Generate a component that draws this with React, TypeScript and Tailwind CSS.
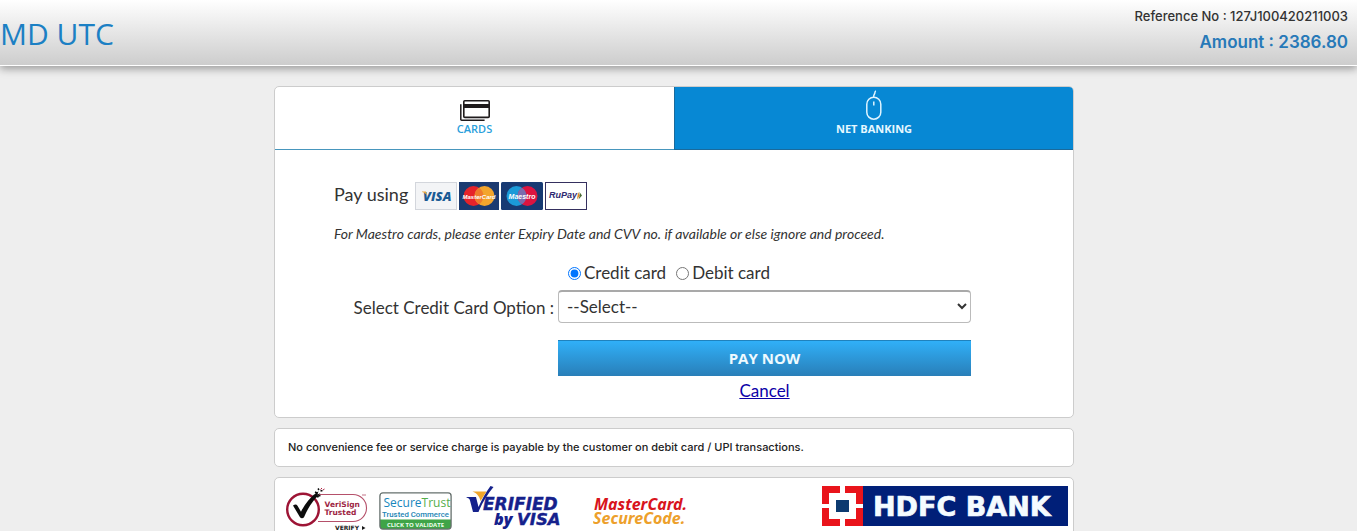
import { useState } from "react";

function CardsIcon() {
  return (
    <svg width="30" height="21" viewBox="0 0 30 21" fill="none" stroke="#1f1b1c" aria-hidden="true">
      <rect x="3.8" y="0.8" width="25.4" height="16.6" rx="1" strokeWidth="1.6" />
      <rect x="4" y="4" width="25" height="4" fill="#1f1b1c" stroke="none" />
      <path d="M0.8 4.2V19.4a0.8 0.8 0 0 0 0.8 0.8H24.6" strokeWidth="1.5" />
    </svg>
  );
}

function MouseIcon() {
  return (
    <svg width="18" height="31" viewBox="0 0 18 31" fill="none" stroke="#dff4ff" strokeWidth="1.5" aria-hidden="true">
      <path d="M8.6 7.2C8.6 4 9.6 4.6 9.8 3.2 10 1.8 10 1.2 11 1" />
      <rect x="1.8" y="7.2" width="14" height="22" rx="7" />
      <path d="M8.8 11.5v4" />
    </svg>
  );
}

function VisaLogo() {
  return (
    <svg width="42" height="28" viewBox="0 0 42 28" role="img" aria-label="Visa">
      <rect x="0.5" y="0.5" width="41" height="27" fill="#f3f4f6" stroke="#d3d6dc" />
      <text x="8" y="19" fontFamily="Open Sans, sans-serif" fontSize="13" fontWeight="800" fontStyle="italic" fill="#1a5a94">VISA</text>
      <path d="M7 9.5h4l1.500 4.500C11 12 9.500 10.500 7 10z" fill="#e9a53a" />
    </svg>
  );
}

function MasterCardLogo() {
  return (
    <svg width="40" height="28" viewBox="0 0 40 28" role="img" aria-label="MasterCard">
      <rect width="40" height="28" fill="#1b3a70" />
      <circle cx="14.500" cy="14" r="10" fill="#e6232a" />
      <circle cx="25.500" cy="14" r="10" fill="#f3a52c" />
      <path d="M20 5.650a10 10 0 0 1 0 16.700a10 10 0 0 1 0-16.700z" fill="#ee7a2b" />
      <text x="20" y="16.500" textAnchor="middle" fontFamily="Liberation Sans, sans-serif" fontSize="6" fontWeight="700" fontStyle="italic" fill="#fff">MasterCard</text>
    </svg>
  );
}

function MaestroLogo() {
  return (
    <svg width="42" height="28" viewBox="0 0 42 28" role="img" aria-label="Maestro">
      <rect width="42" height="28" rx="1.500" fill="#173a73" />
      <circle cx="15.500" cy="14" r="10" fill="#1b9ad8" />
      <circle cx="26.500" cy="14" r="10" fill="#dc1440" />
      <path d="M21 5.650a10 10 0 0 1 0 16.700a10 10 0 0 1 0-16.700z" fill="#7a6cae" />
      <text x="21" y="17" textAnchor="middle" fontFamily="Liberation Sans, sans-serif" fontSize="7" fontWeight="700" fontStyle="italic" fill="#fff">Maestro</text>
    </svg>
  );
}

function RuPayLogo() {
  return (
    <svg width="42" height="28" viewBox="0 0 42 28" role="img" aria-label="RuPay">
      <rect x="0.5" y="0.5" width="41" height="27" fill="#fff" stroke="#35305f" />
      <text x="4" y="16" fontFamily="Liberation Sans, sans-serif" fontSize="9" fontWeight="700" fontStyle="italic" fill="#2e2a72">RuPay</text>
      <path d="M33 10l2 3.500-3 4z" fill="#e28a2b" />
      <path d="M34.500 10l2.500 3.500-3.500 4 1.300-4z" fill="#4a6b35" />
    </svg>
  );
}

function VeriSignLogo() {
  return (
    <svg width="84" height="46" viewBox="0 0 84 46" role="img" aria-label="VeriSign Trusted">
      <path d="M33 8.500H68a13.500 13.500 0 0 1 0 27H33" fill="none" stroke="#b5506a" strokeWidth="1.100" />
      <circle cx="18" cy="23.500" r="15.800" fill="#fff" stroke="#9d1435" strokeWidth="2.400" />
      <path d="M8 19.500c2-1.500 3.500-1.500 4.500 0.200l3.500 6C20 17.500 25 12 31 7l2.500-1.800-1 3.300 3-1.500C28 14.500 23 21.500 19 31.200c-1 1.300-3 1.300-4 0z" fill="#0c0c0c" />
      <path d="M30 6l2 1M33 2.500l1 1.500M35.500 5l2-0.500M33 10l2.500-0.500M28.500 9.500l5 1.500" stroke="#0c0c0c" strokeWidth="1.500" />
      <path d="M35.500 3.500l1.500-1.500M38 4l1.500-1" stroke="#b01a3e" strokeWidth="1" />
      <text x="39.500" y="21" fontFamily="DejaVu Sans, sans-serif" fontSize="7.500" fontWeight="700" fill="#9d1f43">VeriSign</text>
      <text x="39.500" y="29" fontFamily="DejaVu Sans, sans-serif" fontSize="7.500" fontWeight="700" fill="#9d1f43">Trusted</text>
      <path d="M77 9h4" stroke="#b5506a" strokeWidth="0.800" />
      <text x="50" y="44" fontFamily="DejaVu Sans, sans-serif" fontSize="6" fontWeight="700" fill="#1a1a1a">VERIFY</text>
      <path d="M77 40l3.500 2-3.500 2z" fill="#1a1a1a" />
    </svg>
  );
}

function SecureTrustLogo() {
  return (
    <svg width="73" height="38" viewBox="0 0 73 38" role="img" aria-label="SecureTrust Trusted Commerce, click to validate">
      <rect x="1" y="1" width="71" height="36" rx="3" fill="#fff" />
      <path d="M1 27.500h71V34a3 3 0 0 1-3 3H4a3 3 0 0 1-3-3z" fill="#3fa447" />
      <rect x="0.900" y="0.900" width="71.200" height="36.200" rx="3" fill="none" stroke="#66706d" strokeWidth="1.300" />
      <text x="4.500" y="15" fontFamily="Open Sans, sans-serif" fontSize="12" fontWeight="500" fill="#1787bd">Secure<tspan fill="#54ae4b">Trust</tspan></text>
      <text x="36.500" y="24.500" textAnchor="middle" fontFamily="Roboto, sans-serif" fontSize="7.800" fontWeight="500" fill="#2184b5">Trusted Commerce</text>
      <text x="36.500" y="34.500" textAnchor="middle" fontFamily="Open Sans, sans-serif" fontSize="6" fontWeight="700" fill="#effff0">CLICK TO VALIDATE</text>
    </svg>
  );
}

function VerifiedByVisaLogo() {
  return (
    <svg width="98" height="44" viewBox="0 0 98 44" role="img" aria-label="Verified by Visa">
      <path d="M0.500 11H10l2.500 10C16 13 20 6 24.500 0l3 1C21 9 16 17 12.500 26H7L4 14.500C3.500 12.500 2.500 12 0.500 11.500z" fill="#15218c" />
      <path d="M6.500 5.500h14L14.500 15C13.500 10.500 11 7 6.500 5.500z" fill="#f2a72c" />
      <text x="17" y="24" fontFamily="DejaVu Sans, sans-serif" fontSize="17" fontWeight="700" fontStyle="italic" fill="#15218c" stroke="#15218c" strokeWidth="0.400">ERIFIED</text>
      <text x="28" y="39" fontFamily="Open Sans, sans-serif" fontSize="16" fontWeight="800" fontStyle="italic" fill="#15218c">by</text>
      <text x="51" y="39" fontFamily="DejaVu Sans, sans-serif" fontSize="16.500" fontWeight="700" fontStyle="italic" fill="#15218c" stroke="#15218c" strokeWidth="0.400">VISA</text>
    </svg>
  );
}

function SecureCodeLogo() {
  return (
    <svg width="98" height="34" viewBox="0 0 98 34" role="img" aria-label="MasterCard SecureCode">
      <text x="1" y="14" fontFamily="Noto Sans, sans-serif" fontSize="16" fontWeight="700" fontStyle="italic" fill="#d8141c">MasterCard.</text>
      <text x="0" y="28" fontFamily="Noto Sans, sans-serif" fontSize="16" fontWeight="700" fontStyle="italic" fill="#eda02b">SecureCode.</text>
    </svg>
  );
}

function HdfcLogo() {
  return (
    <svg width="246" height="40" viewBox="0 0 246 40" role="img" aria-label="HDFC Bank">
      <rect width="246" height="40" fill="#001f78" />
      <rect width="41" height="40" fill="#e9141b" />
      <rect x="7" y="7" width="27" height="26" fill="#fff" />
      <path d="M18 0h5v40h-5zM0 18h41v4H0z" fill="#fff" />
      <rect x="14" y="14" width="13" height="12" fill="#0c3a70" />
      <text x="51" y="29.500" fontFamily="DejaVu Sans, sans-serif" fontSize="27" fontWeight="700" fill="#f4fbff" stroke="#f4fbff" strokeWidth="0.700">HDFC BANK</text>
    </svg>
  );
}

export default function App() {
  const [tab, setTab] = useState("cards");
  const [cardType, setCardType] = useState("credit");

  return (
    <div className="h-screen overflow-y-auto bg-[#eeeeee] font-['Lato',sans-serif] text-[#333333] [scrollbar-width:none]">
      <header className="flex h-[66px] justify-between border-b border-white bg-linear-to-b from-white to-[#cdcdcd] pr-[9px] shadow-[0_3px_8px_rgba(0,0,0,0.35)]">
        <h1 className="pt-3 font-['Open_Sans',sans-serif] text-[30px] leading-[44px] font-medium text-[#1c80c4]">MD UTC</h1>
        <div className="pt-2 text-right font-['Inter',sans-serif]">
          <p className="text-[13px] leading-4 font-medium">Reference No : 127J100420211003</p>
          <p className="pt-1 text-[17px] leading-7 font-semibold text-[#2779b8]">Amount : 2386.80</p>
        </div>
      </header>

      <main className="pt-5 pr-[9px]">
        <div className="mx-auto flex w-full max-w-[800px] flex-col gap-[10px]">
          <section className="overflow-hidden rounded-[5px] border border-[#cccccc] bg-white">
            <div className="grid grid-cols-2 font-['Open_Sans',sans-serif] text-[11px] leading-4" role="tablist">
              <button
                type="button"
                role="tab"
                aria-selected={tab === "cards"}
                onClick={() => setTab("cards")}
                className="flex h-[63px] flex-col items-center justify-end border-b border-[#4796bd] pb-3 font-semibold text-[#2aa0dc]"
              >
                <CardsIcon />
                CARDS
              </button>
              <button
                type="button"
                role="tab"
                aria-selected={tab === "netbanking"}
                onClick={() => setTab("netbanking")}
                className="flex h-[63px] flex-col items-center justify-end border-b border-l border-[#1a6a9c] bg-[#0788d4] pb-3 font-bold text-[#e6f8ff]"
              >
                <MouseIcon />
                NET BANKING
              </button>
            </div>

            <form className="pt-8 pr-[102px] pb-[14px]" onSubmit={(e) => e.preventDefault()}>
              <div className="pl-[59px]">
                <div className="flex items-start gap-[7px]">
                  <p className="text-lg leading-6">Pay using</p>
                  <div className="flex gap-[2px]">
                    <VisaLogo />
                    <MasterCardLogo />
                    <MaestroLogo />
                    <RuPayLogo />
                  </div>
                </div>
                <p className="pt-[14px] text-sm leading-5 italic">
                  For Maestro cards, please enter Expiry Date and CVV no. if available or else ignore and proceed.
                </p>
              </div>

              <div className="grid grid-cols-[283px_minmax(0,1fr)] pt-[17px] text-[17px] leading-6">
                <fieldset aria-label="Card type" className="col-start-2 flex items-center gap-[10px] pl-[10px]">
                  <label className="flex items-center gap-[3px]">
                    <input type="radio" name="cardType" className="size-[13px]" checked={cardType === "credit"} onChange={() => setCardType("credit")} />
                    Credit card
                  </label>
                  <label className="flex items-center gap-[3px]">
                    <input type="radio" name="cardType" className="size-[13px]" checked={cardType === "debit"} onChange={() => setCardType("debit")} />
                    Debit card
                  </label>
                </fieldset>

                <label htmlFor="option" className="self-center pt-[8px] pr-1 text-right">
                  Select Credit Card Option :
                </label>
                <select
                  id="option"
                  className="mt-[5px] h-[33px] w-full rounded-[4px] border border-t-2 border-[#bbbbbb] border-t-[#a9a9a9] bg-white pb-[2px] pl-1"
                >
                  <option>--Select--</option>
                </select>

                <button
                  type="submit"
                  className="col-start-2 mt-[17px] h-9 border-y border-t-[#1f82bd] border-b-[#2a7fb8] bg-linear-to-b from-[#30b0f8] to-[#2980ba] font-['Open_Sans',sans-serif] text-[15px] font-bold text-[#eefaff]"
                >
                  PAY NOW
                </button>
                <a href="#cancel" className="col-start-2 mt-[3px] justify-self-center text-[#0c00a8] underline">
                  Cancel
                </a>
              </div>
            </form>
          </section>

          <section className="rounded-[5px] border border-[#cccccc] bg-white px-[13px] py-[10px]">
            <p className="font-['Inter',sans-serif] text-[11px] leading-[17px] font-medium text-[#222222]">
              No convenience fee or service charge is payable by the customer on debit card / UPI transactions.
            </p>
          </section>

          <footer className="flex items-start rounded-[5px] border border-[#cccccc] bg-white pt-[8px] pr-[5px] pb-3 pl-[10px]">
            <VeriSignLogo />
            <div className="pt-[6px] pl-[10px]">
              <SecureTrustLogo />
            </div>
            <div className="pl-[14px]">
              <VerifiedByVisaLogo />
            </div>
            <div className="pt-[10px] pl-[29px]">
              <SecureCodeLogo />
            </div>
            <div className="ml-auto">
              <HdfcLogo />
            </div>
          </footer>
        </div>
      </main>
    </div>
  );
}
